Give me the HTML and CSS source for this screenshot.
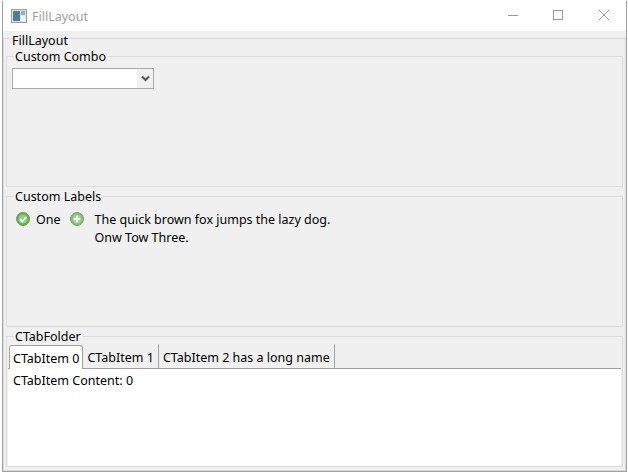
FILE: index.html
```html
<!DOCTYPE html>
<html lang="en">
<head>
<meta charset="utf-8">
<title>FillLayout</title>
<link rel="stylesheet" href="styles.css">
</head>
<body>
<div class="window">
  <header class="titlebar">
    <svg class="app-icon" width="16" height="14" viewBox="0 0 16 14">
      <rect x="0.5" y="0.5" width="15" height="13" fill="#dfe3e6" stroke="#9a9ea3"/>
      <rect x="2" y="2" width="7" height="10" fill="#4f7f95"/>
      <rect x="10" y="2" width="4" height="4" fill="#8fb7a8"/>
      <rect x="10" y="7" width="4" height="5" fill="#f2f4f4"/>
    </svg>
    <span class="title">FillLayout</span>
    <div class="controls">
      <svg class="ctl" width="46" height="30" viewBox="0 0 46 30"><path d="M20 14.5h10" stroke="#9a9a9a" fill="none"/></svg>
      <svg class="ctl" width="46" height="30" viewBox="0 0 46 30"><rect x="19.5" y="9.5" width="9" height="9" stroke="#9a9a9a" fill="none"/></svg>
      <svg class="ctl" width="46" height="30" viewBox="0 0 46 30"><path d="M19 9l10 10M29 9l-10 10" stroke="#9a9a9a" fill="none"/></svg>
    </div>
  </header>
  <fieldset class="group outer">
    <legend class="outer-legend">FillLayout</legend>
    <fieldset class="group pane">
      <legend class="legend">Custom Combo</legend>
      <div class="combo">
        <div class="combo-input"></div>
        <div class="combo-btn">
          <svg width="9" height="7" viewBox="0 0 9 7"><path d="M1 1.5l3.5 3.5 3.5-3.5" stroke="#555" stroke-width="2" fill="none"/></svg>
        </div>
      </div>
    </fieldset>
    <fieldset class="group pane">
      <legend class="legend">Custom Labels</legend>
      <div class="labels">
        <svg class="badge" width="14" height="14" viewBox="0 0 14 14">
          <circle cx="7" cy="7" r="6.5" fill="#5fae50" stroke="#6f9f68"/>
          <circle cx="7" cy="7" r="4.6" fill="#8fce7c"/>
          <path d="M4 7.2l2.2 2.2 4-4.2" stroke="#fff" stroke-width="1.8" fill="none"/>
        </svg>
        <span class="one">One</span>
        <svg class="badge" width="14" height="14" viewBox="0 0 14 14">
          <circle cx="7" cy="7" r="6.5" fill="#82b872" stroke="#7da874"/>
          <circle cx="7" cy="7" r="4.6" fill="#a5d195"/>
          <path d="M7 3.8v6.4M3.8 7h6.4" stroke="#fff" stroke-width="2" fill="none"/>
        </svg>
        <p class="para">The quick brown fox jumps the lazy dog.<br>Onw Tow Three.</p>
      </div>
    </fieldset>
    <fieldset class="group pane">
      <legend class="legend">CTabFolder</legend>
      <div class="folder">
        <div class="tabs">
          <div class="tab active">CTabItem 0</div>
          <div class="tab">CTabItem 1</div>
          <div class="tab">CTabItem 2 has a long name</div>
        </div>
        <div class="tab-body">CTabItem Content: 0</div>
      </div>
    </fieldset>
  </fieldset>
</div>
</body>
</html>
```
FILE: styles.css
```css
* { box-sizing: border-box; }
html, body { margin: 0; height: 100%; background: #fff; overflow: hidden; }
body { padding: 1px 1px 1px 2px; font-family: "Noto Sans", sans-serif; font-size: 12.5px; line-height: 18px; color: #000; }
.window { width: 625px; height: 471px; display: flex; flex-direction: column; background: #f0f0f0; border: solid #a0a0a0; border-width: 0 1px 1px 1px; }
.titlebar { height: 30px; flex: none; background: #fff; display: flex; align-items: center; padding-left: 8px; }
.app-icon { flex: none; }
.title { margin-left: 5px; padding-top: 1px; color: #a0a0a0; }
.controls { margin-left: auto; display: flex; }
.ctl { display: block; }
.group { margin: 0; padding: 0; border: 1px solid #dcdcdc; min-width: 0; }
.outer { flex: 1; margin-top: -1px; padding: 0 2px; }
.outer-legend { padding: 2px 1px 0 0; margin-left: 6px; height: 17px; }
.pane { height: 140px; }
.legend { padding: 1px 2px 0; margin-left: 6px; height: 18px; }
.combo { display: flex; width: 142px; height: 21px; margin: 3px 0 0 5px; border: 1px solid #a9a9a9; background: #fff; }
.combo-input { flex: 1; }
.combo-btn { width: 16px; background: #f0f0f0; display: flex; align-items: center; justify-content: center; }
.labels { display: flex; align-items: flex-start; margin-top: 6px; padding-left: 9px; }
.badge { flex: none; margin-top: 1px; }
.one { margin: 0 9px 0 6px; }
.para { margin: 0 0 0 11px; }
.folder { display: flex; flex-direction: column; height: 121px; margin: 0 1px; }
.tabs { display: flex; height: 24px; flex: none; padding-left: 1px; border-bottom: 1px solid #a0a0a0; }
.tab { padding: 4px 4px 0 4px; border-right: 1px solid #a0a0a0; white-space: nowrap; }
.tab.active { background: #fff; height: 24px; padding: 4px 3px 0 3px; border: 1px solid #a0a0a0; border-bottom: 0; border-radius: 3px 3px 0 0; }
.tab-body { flex: 1; background: #fff; padding: 3px 5px; }
```
